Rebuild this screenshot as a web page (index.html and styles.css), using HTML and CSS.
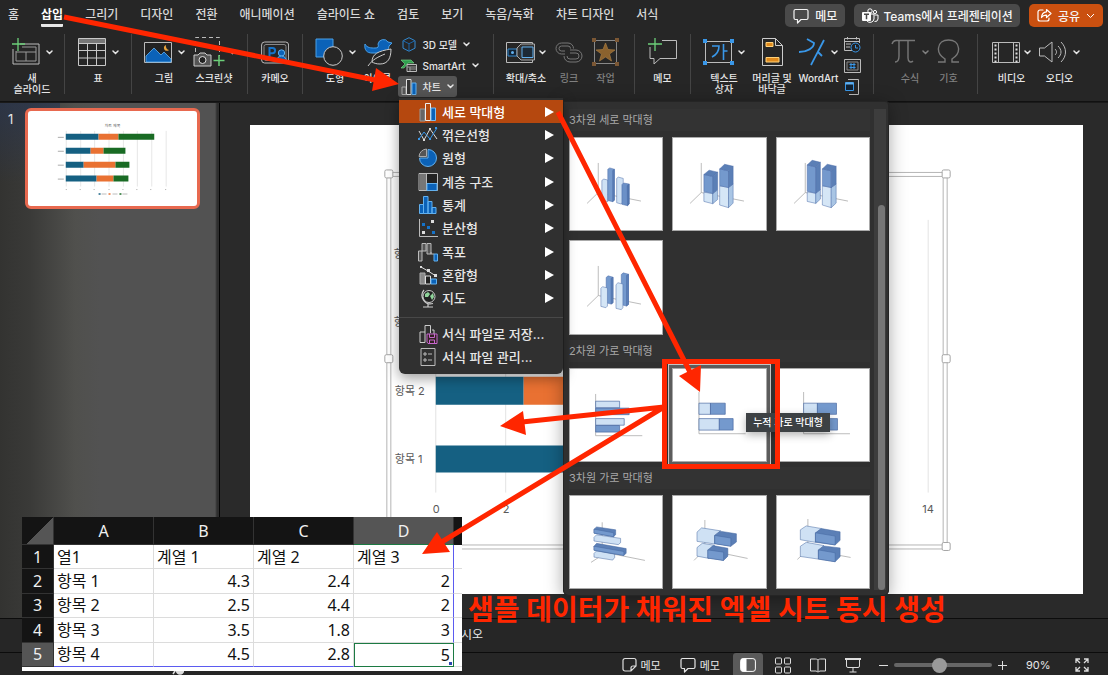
FILE: index.html
```html
<!DOCTYPE html>
<html lang="ko">
<head>
<meta charset="utf-8">
<title>차트 삽입</title>
<link rel="stylesheet" href="styles.css">
</head>
<body>
<svg class="defs" aria-hidden="true">
  <symbol id="chev" viewBox="0 0 7 5"><path d="M1 1l2.500 2.500L6 1" fill="none" stroke="currentColor" stroke-width="1.500" stroke-linecap="round"/></symbol>
  <symbol id="axes3d" viewBox="0 0 281 281"><path d="M86 76V166L52 199M86 166L216 192" fill="none" stroke="#999" stroke-width="2"/></symbol>
  <symbol id="note" viewBox="0 0 16 16"><path d="M2.500 1.500h11a1.500 1.500 0 011.500 1.500v7a1.500 1.500 0 01-1.500 1.500H8L4.500 15v-3.500h-2A1.500 1.500 0 011 10V3a1.500 1.500 0 011.500-1.500z" fill="none" stroke="currentColor" stroke-width="1.200" stroke-linejoin="round"/></symbol>
</svg>
<div class="app">
  <header class="top">
    <nav class="tabs">
      <a href="#">홈</a><a href="#" class="active">삽입</a><a href="#">그리기</a><a href="#">디자인</a><a href="#">전환</a><a href="#">애니메이션</a><a href="#">슬라이드 쇼</a><a href="#">검토</a><a href="#">보기</a><a href="#">녹음/녹화</a><a href="#">차트 디자인</a><a href="#">서식</a>
    </nav>
    <div class="actions">
      <button class="act"><svg width="16" height="16"><use href="#note"/></svg>메모</button>
      <button class="act teams"><svg width="18" height="16" viewBox="0 0 18 16"><circle cx="9" cy="3" r="2.200" fill="none" stroke="#fff"/><circle cx="14" cy="4" r="1.600" fill="none" stroke="#fff"/><path d="M8 6h5v5a4 4 0 01-7 2M13.500 7H17v4a3 3 0 01-3.500 2.500" fill="none" stroke="#fff"/><rect x="1" y="4" width="9" height="9" rx="1" fill="#fff"/><path d="M3 6.200h5M5.500 6.200v5" stroke="#484848" stroke-width="1.500"/></svg>Teams에서 프레젠테이션</button>
      <button class="act share"><svg width="15" height="15" viewBox="0 0 15 15" fill="none" stroke="#fff" stroke-width="1.200" stroke-linejoin="round" stroke-linecap="round"><path d="M6 2H3a2 2 0 00-2 2v7a2 2 0 002 2h7a2 2 0 002-2v-1"/><path d="M9.500 1.500l4.500 4-4.500 4V7.200C7 7 5.500 8 4.500 9.500 4.700 6 6.500 4 9.500 3.800z"/></svg>공유<svg width="9" height="6" viewBox="0 0 9 6"><path d="M1 1l3.500 3.500L8 1" fill="none" stroke="#fff"/></svg></button>
    </div>
  </header>

  <section class="ribbon" aria-label="삽입">
    <div class="group">
      <button class="tool"><span class="pic"><svg width="28" height="28" viewBox="0 0 28 28" fill="none"><path d="M8 6h19v20H1V11" stroke="#bbb"/><path d="M10 9h14v14H4V13M4 14h20M14 14v9" stroke="#999"/><path d="M6 0v13M0 6h13" stroke="#6ccf79" stroke-width="1.300"/></svg><svg class="chev"><use href="#chev"/></svg></span><span class="label">새<br>슬라이드</span></button>
    </div>
    <div class="group">
      <button class="tool"><span class="pic"><svg width="28" height="28" viewBox="0 0 28 28" fill="none"><path d="M1 1h26v4H1z" fill="#777"/><path d="M1 .5h26.500v27H.5V.5zM1 5.500h26M1 12.500h26M1 20h26M9.500 5v22M18.500 5v22" stroke="#c8c8c8"/></svg><svg class="chev"><use href="#chev"/></svg></span><span class="label">표</span></button>
    </div>
    <div class="group">
      <button class="tool"><span class="pic"><svg width="28" height="28" viewBox="0 0 28 28"><path d="M.5 4.500h27v20H.5z" fill="#222" stroke="#bbb"/><path d="M2 24V18l8-8 7 7 3-3 7 7v3z" fill="#0b62b8" stroke="#62b0ee" stroke-width=".8"/><path d="M22 7a3 3 0 103 5 4 4 0 01-3-5z" fill="#e8a33d"/></svg><svg class="chev"><use href="#chev"/></svg></span><span class="label">그림</span></button>
      <button class="tool"><span class="pic"><svg width="32" height="30" viewBox="0 0 32 30" fill="none"><path d="M2.500 15V.5h24V19" stroke="#bbb" stroke-dasharray="4 3"/><path d="M1 18h4l2-2h5l2 2h4v11H1z" fill="#555" stroke="#ccc"/><circle cx="9.500" cy="23" r="3.500" fill="#222" stroke="#ddd"/><path d="M26 18v11M20.500 23.500h11" stroke="#6ccf79" stroke-width="1.500"/></svg><svg class="chev near"><use href="#chev"/></svg></span><span class="label">스크린샷</span></button>
    </div>
    <div class="group">
      <button class="tool"><span class="pic"><svg width="28" height="28" viewBox="0 0 28 28" fill="none"><rect x=".6" y="4" width="27" height="21" rx="3" stroke="#bbb"/><rect x="3" y="6.500" width="22" height="16" rx="2" stroke="#888"/><path d="M8.500 19V10h3a2.600 2.600 0 010 5.200h-3" stroke="#1673c8" stroke-width="2"/><circle cx="20.500" cy="15" r="3.200" fill="#0b62b8" stroke="#62b0ee"/><path d="M15.500 23a5 5 0 0110 0z" fill="#0b62b8" stroke="#62b0ee"/></svg></span><span class="label">카메오</span></button>
    </div>
    <div class="group">
      <button class="tool"><span class="pic"><svg width="28" height="28" viewBox="0 0 28 28"><path d="M1 1h17v18H1z" fill="#0b62b8" stroke="#4aa0e6"/><circle cx="18" cy="18" r="9.300" fill="#262626" stroke="#ccc"/></svg><svg class="chev"><use href="#chev"/></svg></span><span class="label">도형</span></button>
      <button class="tool"><span class="pic"><svg width="28" height="30" viewBox="0 0 28 30"><path d="M14 7a5.500 5.500 0 0110-2l4 1-3 3c0 4-3 5-4 7H8C3 16 0 13 1 7c2 4 6 4 10 4 3 0 4-1 3-4z" fill="#0b62b8" stroke="#4aa0e6"/><path d="M8 25c0-8 6-11 19-13 0 9-3 15-11 15-4 0-6-1-8-2zM4 29c5-7 10-9 17-12" fill="#262626" stroke="#ccc"/></svg></span><span class="label">아이콘</span></button>
      <div class="stack">
        <button class="mini"><svg width="16" height="15" viewBox="0 0 16 15" fill="none" stroke="#3489cf"><path d="M8 .7l6 3v7.500l-6 3-6-3V3.700z"/><path d="M2 3.700l6 3 6-3M8 6.700v7.500" stroke="#1c65a8"/></svg>3D 모델<svg class="chev"><use href="#chev"/></svg></button>
        <button class="mini"><svg width="16" height="13" viewBox="0 0 16 13"><path d="M0 1h10l3 3H7l-4 5H0l4-4z" fill="#2f9e4f" stroke="#7fdb8d" stroke-width=".6"/><path d="M6 5.500h9.500v7H6z" fill="#333" stroke="#bbb"/><path d="M6 8h9M9 8v4M8 10h7" stroke="#999"/></svg>SmartArt<svg class="chev"><use href="#chev"/></svg></button>
        <button class="mini on"><svg width="16" height="16" viewBox="0 0 16 16"><path d="M1 8h4v7.500H1z" fill="#555" stroke="#aaa"/><path d="M5.500.5h4.500v15H5.500z" fill="#333" stroke="#ddd"/><path d="M11 4h4v11.500h-4z" fill="#0b62b8" stroke="#62b0ee"/></svg>차트<svg class="chev"><use href="#chev"/></svg></button>
      </div>
    </div>
    <div class="group zoomset">
      <button class="tool"><span class="pic"><svg width="29" height="28" viewBox="0 0 29 28"><path d="M.5 4.500h26v20H.5z" fill="none" stroke="#bbb"/><path d="M2 11h9v7H2z" fill="#123" stroke="#3489cf"/><circle cx="6.500" cy="14.500" r="1.500" fill="#62b0ee"/><path d="M11 10l4-4h13.500v16H15l-4-4z" fill="#333" stroke="#aaa"/><path d="M16 9h11v10.500H16z" fill="#1d2a36" stroke="#62b0ee"/></svg><svg class="chev near"><use href="#chev"/></svg></span><span class="label">확대/축소</span></button>
      <button class="tool dim" disabled><span class="pic"><svg width="28" height="28" viewBox="0 0 28 28" fill="none" stroke="#777"><path d="M10 16H6.500a5.500 5.500 0 010-11H13a5.500 5.500 0 015.500 5.500M15 12h6a6 6 0 010 12h-6a6 6 0 01-6-6"/><path d="M10 13H6.500a2.500 2.500 0 010-5H13a2.500 2.500 0 012.500 2.500M15 15h6a3 3 0 010 6h-6a3 3 0 01-3-3"/></svg></span><span class="label">링크</span></button>
      <button class="tool dim" disabled><span class="pic"><svg width="27" height="28" viewBox="0 0 27 28"><path d="M2.500 2.500h22v23h-22z" fill="none" stroke="#888"/><path d="M0 0h4v4H0zM23 0h4v4h-4zM0 24h4v4H0zM23 24h4v4h-4z" fill="#7b5734"/><path d="M13.500 5l2.500 6.500 7 .5-5.500 4 2 7-6-4-6 4 2-7L4 12l7-.5z" fill="#8b622e" stroke="#a57a42" stroke-width=".7"/></svg></span><span class="label">작업</span></button>
    </div>
    <div class="group">
      <button class="tool"><span class="pic"><svg width="29" height="28" viewBox="0 0 29 28" fill="none"><path d="M14 2.500h14.500v18H12L6 26v-5.500H2V9" stroke="#bbb"/><path d="M7 0v13M0 6h14" stroke="#6ccf79" stroke-width="1.300"/></svg></span><span class="label">메모</span></button>
    </div>
    <div class="group">
      <button class="tool"><span class="pic"><svg width="31" height="28" viewBox="0 0 31 28"><path d="M2.500 3.500h26v21h-26z" fill="none" stroke="#bbb"/><path d="M0 1h4v4H0zM27 1h4v4h-4zM0 23h4v4H0zM27 23h4v4h-4z" fill="#3997e8"/><path d="M9 8h7c0 5-3 9-7 11M20.500 6v16M20.500 13h4" fill="none" stroke="#3997e8" stroke-width="1.600"/></svg><svg class="chev near"><use href="#chev"/></svg></span><span class="label">텍스트<br>상자</span></button>
      <button class="tool wide"><span class="pic"><svg width="21" height="28" viewBox="0 0 21 28"><path d="M.5.5h13l7 7v20H.5z" fill="none" stroke="#ccc"/><path d="M13.500.5v7h7" fill="none" stroke="#ccc"/><path d="M4 4.500h7v4H4zM4 19.500h13v4.500H4z" fill="#e08a1c" stroke="#ffd27a"/></svg></span><span class="label">머리글 및<br>바닥글</span></button>
      <button class="tool"><span class="pic"><svg width="26" height="28" viewBox="0 0 26 28" fill="none" stroke="#3997e8" stroke-width="1.800"><path d="M8 1l7 4c0 5-7 9-15 9M25 2c-4 8-8 15-13 25M19 14l4 4"/></svg><svg class="chev"><use href="#chev"/></svg></span><span class="label">WordArt</span></button>
      <div class="stack trio">
        <button class="mini" aria-label="날짜 및 시간"><svg width="17" height="17" viewBox="0 0 17 17" fill="none"><path d="M8 14.500H.5v-12h15V7M.5 5.500h15M3.500 1v2.500M12.500 1v2.500M2 8h5M2 11h4" stroke="#bbb"/><circle cx="11.500" cy="11.500" r="4.500" fill="#222" stroke="#3997e8"/><path d="M11.500 9v3h2.500" stroke="#3997e8"/></svg></button>
        <button class="mini" aria-label="슬라이드 번호"><svg width="17" height="14" viewBox="0 0 17 14" fill="none"><path d="M.5.5h16v13H.5z" stroke="#bbb"/><path d="M3 3h11v8H3z" stroke="#888"/><path d="M5.500 5.500h6M5.500 8.500h6M7 4v6M10 4v6" stroke="#3997e8"/></svg></button>
        <button class="mini" aria-label="개체"><svg width="17" height="17" viewBox="0 0 17 17"><path d="M4 1.500h10.500v15H5" fill="none" stroke="#bbb"/><path d="M1.500 4.500h8v8h-8z" fill="#123" stroke="#3997e8"/><path d="M1.500 5.500h8" stroke="#62b0ee" stroke-width="2"/></svg></button>
      </div>
    </div>
    <div class="group">
      <button class="tool dim" disabled><span class="pic"><svg width="25" height="28" viewBox="0 0 25 28" fill="none" stroke="#777" stroke-width="1.400"><path d="M1 6c1-3 2-3.500 4-3.500h19M8 3v15c0 4-2 6-4 6M17 3v17c0 4 3 5 5 3"/></svg><svg class="chev"><use href="#chev"/></svg></span><span class="label">수식</span></button>
      <button class="tool dim" disabled><span class="pic"><svg width="23" height="28" viewBox="0 0 23 28" fill="none" stroke="#777" stroke-width="1.400"><path d="M1 24h7v-3C3 18 1 14 1.500 10 2 5 6 2 11.500 2S21 5 21.500 10c.5 4-1.500 8-6.500 11v3h7"/></svg></span><span class="label">기호</span></button>
    </div>
    <div class="group last">
      <button class="tool"><span class="pic"><svg width="28" height="28" viewBox="0 0 28 28" fill="none"><path d="M.5 4.500h27v20H.5zM6.500 5v19M21.500 5v19" stroke="#bbb"/><path d="M3.500 6.500v18M24.500 6.500v18" stroke="#ddd" stroke-width="2" stroke-dasharray="2 2"/></svg><svg class="chev near"><use href="#chev"/></svg></span><span class="label">비디오</span></button>
      <button class="tool"><span class="pic"><svg width="28" height="28" viewBox="0 0 28 28" fill="none" stroke="#bbb"><path d="M.5 10h5L13 4v20L5.500 18h-5z"/><path d="M16 11c2 2 2 4 0 6M19 8c4 4 4 8 0 12M22 4c6 6 6 14 0 20"/></svg><svg class="chev"><use href="#chev"/></svg></span><span class="label">오디오</span></button>
    </div>
  </section>

  <main class="work">
    <aside class="slides">
      <span class="num">1</span>
      <button class="thumb" aria-label="슬라이드 1">
        <svg viewBox="0 0 168 94">
          <path d="M37.500 19v56M52 19v56M66 19v56M80.500 19v56M95 19v56M109 19v56M123.500 19v56M138 19v56" stroke="#dcdcdc" stroke-width=".7"/>
          <g fill="#156082"><path d="M37 22h33v6H37zM37 36h25v6H37zM37 50h18v6H37zM37 64h31v6H37z"/></g>
          <g fill="#e97132"><path d="M70 22h20v6H70zM62 36h13v6H62zM55 50h32v6H55zM68 64h17v6H68z"/></g>
          <g fill="#196b24"><path d="M90 22h36v6H90zM75 36h22v6H75zM87 50h14v6H87zM85 64h15v6H85z"/></g>
          <path d="M29 25.500h6M29 39.500h6M29 53.500h6M29 67.500h6M37 78h1M51 78h1M65 78h1M80 78h1M94 78h1M108 78h1M122 78h1M137 78h1" stroke="#aaa"/>
          <path d="M70 82.500h2" stroke="#156082" stroke-width="1.500"/><path d="M80 82.500h2" stroke="#e97132" stroke-width="1.500"/><path d="M91 82.500h2" stroke="#196b24" stroke-width="1.500"/><path d="M73 82.500h5M84 82.500h5M94 82.500h5" stroke="#bbb"/>
          <text x="84" y="15" font-size="4" text-anchor="middle" fill="#555">차트 제목</text>
        </svg>
      </button>
    </aside>
    <div class="canvas">
      <svg class="slide" viewBox="0 0 834 470" preserveAspectRatio="none">
        <rect width="834" height="470" fill="#fff"/>
        <path d="M186 95v273M256 95v273M327 95v273M397 95v273M468 95v273M538 95v273M608 95v273M679 95v273" stroke="#e3e3e3"/>
        <g fill="#156082"><path d="M186 115h158v28H186zM186 184h123v27H186zM186 252h88v28H186zM186 321h151v27H186z"/></g>
        <g fill="#e97132"><path d="M344 115h99v28h-99zM309 184h63v27h-63zM274 252h155v28H274zM337 321h84v27h-84z"/></g>
        <g class="axis"><text x="144" y="133">항목 4</text><text x="144" y="201">항목 3</text><text x="145" y="270">항목 2</text><text x="145" y="338">항목 1</text>
        <text x="183" y="388">0</text><text x="253" y="388">2</text><text x="673" y="388">14</text></g>
        <path d="M137 47.500h561v377H137zM141 51.500h553v369H141z" fill="none" stroke="#b5b5b5"/>
        <g fill="#fff" stroke="#a5a5a5"><rect x="135" y="45" width="8" height="8" rx="1.500"/><rect x="135" y="230" width="8" height="8" rx="1.500"/><rect x="693" y="45" width="8" height="8" rx="1.500"/><rect x="693" y="230" width="8" height="8" rx="1.500"/><rect x="693" y="418" width="8" height="8" rx="1.500"/></g>
      </svg>
    </div>
  </main>
  <div class="notes">시오</div>
  <footer class="status">
    <button class="access" aria-label="접근성"><svg width="13" height="13" viewBox="0 0 13 13" fill="none" stroke="#ddd" stroke-width="1.500"><circle cx="4" cy="2.500" r="1.500"/><path d="M1 6h7M4 6v3l-2 3"/><circle cx="9" cy="8.500" r="3.500" fill="#ddd"/></svg></button>
    <button class="sb"><svg width="15" height="16" viewBox="0 0 15 16" fill="none" stroke="#ddd" stroke-width="1.200"><path d="M3 1.500h9a2 2 0 012 2V9l-5 5H3a2 2 0 01-2-2V3.500a2 2 0 012-2zM14 9h-3a2 2 0 00-2 2v3"/></svg>메모</button>
    <button class="sb"><svg width="16" height="16"><use href="#note"/></svg>메모</button>
    <div class="views">
      <button class="view on" aria-label="기본"><svg width="16" height="14" viewBox="0 0 16 14"><rect x=".6" y=".6" width="14.800" height="12.800" rx="2.500" fill="none" stroke="#fff"/><path d="M3 .6h3.500v12.800H3a2 2 0 01-2-2V3A2 2 0 013 .6z" fill="#fff"/></svg></button>
      <button class="view" aria-label="여러 슬라이드"><svg width="16" height="17" viewBox="0 0 16 17" fill="none" stroke="#ddd"><rect x=".5" y="1" width="6" height="6" rx="1"/><rect x="9.500" y="1" width="6" height="6" rx="1"/><rect x=".5" y="10" width="6" height="6" rx="1"/><rect x="9.500" y="10" width="6" height="6" rx="1"/></svg></button>
      <button class="view" aria-label="읽기용 보기"><svg width="16" height="16" viewBox="0 0 16 16" fill="none" stroke="#ddd"><path d="M8 3v11M8 3c-1-1-2-1-3-1H.5v12H6l2 1 2-1h5.500V2H11c-1 0-2 0-3 1z"/></svg></button>
      <button class="view" aria-label="슬라이드 쇼"><svg width="16" height="16" viewBox="0 0 16 16" fill="none" stroke="#ddd"><path d="M0 2h16" stroke-width="2"/><path d="M1.500 2v7a1.500 1.500 0 001.500 1.500h10A1.500 1.500 0 0014.500 9V2M8 10.500V15M4.500 15h7"/></svg></button>
    </div>
    <button class="zoombtn" aria-label="축소"><svg width="9" height="9"><path d="M0 4.500h9" stroke="#ddd"/></svg></button>
    <input class="zoom" type="range" min="10" max="170" value="83" aria-label="확대/축소">
    <button class="zoombtn" aria-label="확대"><svg width="9" height="9"><path d="M0 4.500h9M4.500 0v9" stroke="#ddd"/></svg></button>
    <span class="pct">90%</span>
    <button class="fit" aria-label="맞춤"><svg width="14" height="14" viewBox="0 0 14 14" fill="none" stroke="#ddd" stroke-width="1.300"><path d="M1 5V1h4M1 1l4 4M9 1h4v4M13 1L9 5M1 9v4h4M1 13l4-4M13 9v4H9M13 13L9 9"/></svg></button>
  </footer>

  <div class="gallery">
    <div class="sections">
      <h3>3차원 세로 막대형</h3>
      <div class="tiles">
        <button class="tile" aria-label="3차원 묶은 세로 막대형"><svg viewBox="0 0 281 281"><use href="#axes3d"/><g stroke="#4a6aa8" stroke-width="1.500" stroke-linejoin="round"><path d="M97 129l6-4 12 3v66l-18-4z" fill="#cfe1f4"/><path d="M115 95l6-4 14 4v94l-5 5-15-4z" fill="#7499cd"/><path d="M130 99l5-4v94l-5 5z" fill="#5b7fb6"/><path d="M142 123l5-4 15 4v70l-6 8-14-4z" fill="#cfe1f4"/><path d="M158 142l5-5 17 3v61l-5 5-17-4z" fill="#6b90c7"/><path d="M174 145l6-5v61l-5 5z" fill="#5276ad"/></g></svg></button>
        <button class="tile" aria-label="3차원 누적 세로 막대형"><svg viewBox="0 0 281 281"><use href="#axes3d"/><g stroke="#4a6aa8" stroke-width="1.500" stroke-linejoin="round"><path d="M94 165l27 4v31l-27-7z" fill="#d5e6f6"/><path d="M121 169l15-11v29l-15 13z" fill="#a9c5e4"/><path d="M94 111l27 6v52l-27-6z" fill="#7499cd"/><path d="M94 111l16-13 26 6-15 13z" fill="#5b7fb6"/><path d="M121 117l15-13v53l-15 12z" fill="#5b7fb6"/><path d="M142 146l27 4v62l-27-8z" fill="#d5e6f6"/><path d="M169 150l14-10v58l-14 14z" fill="#a9c5e4"/><path d="M142 94l27 6v51l-27-6z" fill="#7499cd"/><path d="M142 94l15-14 26 6-14 14z" fill="#5b7fb6"/><path d="M169 100l14-14v54l-14 11z" fill="#5b7fb6"/></g></svg></button>
        <button class="tile" aria-label="3차원 100% 누적 세로 막대형"><svg viewBox="0 0 281 281"><use href="#axes3d"/><g stroke="#4a6aa8" stroke-width="1.500" stroke-linejoin="round"><path d="M92 164l26 4v31l-26-6z" fill="#d5e6f6"/><path d="M118 168l14-11v29l-14 13z" fill="#a9c5e4"/><path d="M92 82l26 6v80l-26-6z" fill="#7499cd"/><path d="M92 82l15-14 25 6-14 14z" fill="#5b7fb6"/><path d="M118 88l14-14v83l-14 11z" fill="#5b7fb6"/><path d="M138 146l27 4v62l-27-8z" fill="#d5e6f6"/><path d="M165 150l15-10v58l-15 14z" fill="#a9c5e4"/><path d="M138 94l27 6v51l-27-6z" fill="#7499cd"/><path d="M138 94l15-14 27 6-15 14z" fill="#5b7fb6"/><path d="M165 100l15-14v54l-15 11z" fill="#5b7fb6"/></g></svg></button>
        <button class="tile" aria-label="3차원 세로 막대형"><svg viewBox="0 0 281 281"><use href="#axes3d"/><g stroke="#4a6aa8" stroke-width="1.500" stroke-linejoin="round"><path d="M110 111l6-5 15 4v78l-6 4-15-4z" fill="#7499cd"/><path d="M125 114l6-4v78l-6 4z" fill="#5b7fb6"/><path d="M94 144l5-5 15 4v55l-5 5-15-4z" fill="#d5e6f6"/><path d="M156 102l6-5 16 4v92l-6 5-16-4z" fill="#7499cd"/><path d="M172 105l6-4v92l-6 5z" fill="#5b7fb6"/><path d="M140 133l6-6 15 4v72l-5 6-16-4z" fill="#d5e6f6"/></g></svg></button>
      </div>
      <h3>2차원 가로 막대형</h3>
      <div class="tiles">
        <button class="tile" aria-label="묶은 가로 막대형"><svg viewBox="0 0 281 281"><path d="M78 76v127h142" fill="none" stroke="#999" stroke-width="2"/><g stroke="#44659f" stroke-width="2"><path d="M78 98h73v20H78z" fill="#cfe1f4"/><path d="M78 119h102v20H78z" fill="#7499cd"/><path d="M78 151h87v20H78z" fill="#cfe1f4"/><path d="M78 172h73v20H78z" fill="#7499cd"/></g></svg></button>
        <button class="tile picked" aria-label="누적 가로 막대형"><svg viewBox="0 0 281 281"><path d="M79 70v127h142" fill="none" stroke="#999" stroke-width="2"/><g stroke="#44659f" stroke-width="2"><path d="M79 104h35v34H79zM79 151h62v35H79z" fill="#cfe1f4"/><path d="M114 104h45v34h-45zM141 151h42v35h-42z" fill="#7499cd"/></g></svg></button>
        <button class="tile" aria-label="100% 누적 가로 막대형"><svg viewBox="0 0 281 281"><path d="M81 70v127h141" fill="none" stroke="#999" stroke-width="2"/><g stroke="#44659f" stroke-width="2"><path d="M81 104h42v34H81zM81 151h58v35H81z" fill="#cfe1f4"/><path d="M123 104h58v34h-58zM139 151h45v35h-45z" fill="#7499cd"/></g></svg></button>
      </div>
      <h3>3차원 가로 막대형</h3>
      <div class="tiles">
        <button class="tile" aria-label="3차원 묶은 가로 막대형"><svg viewBox="0 0 281 281"><path d="M98 80v100L64 202M98 170l130 26" fill="none" stroke="#999" stroke-width="2"/><g stroke="#44659f" stroke-width="1.500" stroke-linejoin="round"><path d="M73 175l8-8 55 10v10l-6 8-57-9z" fill="#cfe1f4"/><path d="M73 153l8-9 90 16v14l-7 7-91-16z" fill="#5b7fb6"/><path d="M73 153l91 16v12l-91-16z" fill="#7499cd"/><path d="M73 126l8-8 73 11v13l-7 6-74-11z" fill="#cfe1f4"/><path d="M73 101l8-7 58 9v14l-6 7-60-11z" fill="#5b7fb6"/><path d="M73 101l60 11v12l-60-11z" fill="#7499cd"/></g></svg></button>
        <button class="tile" aria-label="3차원 누적 가로 막대형"><svg viewBox="0 0 281 281"><path d="M97 73v90L64 196M97 163l130 27" fill="none" stroke="#999" stroke-width="2"/><g stroke="#44659f" stroke-width="1.500" stroke-linejoin="round"><path d="M73 157l16-13 38 6-17 14v26l-37-7z" fill="#cfe1f4"/><path d="M106 164l16-13 45 8v24l-13 13-48-7z" fill="#5b7fb6"/><path d="M106 164l48 7v25l-48-7z" fill="#7499cd"/><path d="M73 110l14-13 58 9-18 14v26l-54-8z" fill="#cfe1f4"/><path d="M127 120l16-13 50 8v25l-17 13-49-8z" fill="#5b7fb6"/><path d="M127 120l49 8v25l-49-8z" fill="#7499cd"/></g></svg></button>
        <button class="tile" aria-label="3차원 100% 누적 가로 막대형"><svg viewBox="0 0 281 281"><path d="M94 70v93L62 193M94 163l130 24" fill="none" stroke="#999" stroke-width="2"/><g stroke="#44659f" stroke-width="1.500" stroke-linejoin="round"><path d="M71 153l18-12 54 10-17 14v27l-55-8z" fill="#cfe1f4"/><path d="M126 164l16-12 50 6v27l-15 15-51-8z" fill="#5b7fb6"/><path d="M126 164l51 9v27l-51-8z" fill="#7499cd"/><path d="M71 103l18-12 46 8-18 15v27l-46-8z" fill="#cfe1f4"/><path d="M117 112l18-13 57 10v26l-15 14-60-8z" fill="#5b7fb6"/><path d="M117 112l60 10v27l-60-10z" fill="#7499cd"/></g></svg></button>
      </div>
    </div>
    <div class="track"><div class="bar"></div></div>
  </div>

  <div class="menu">
    <div class="items">
      <button class="item on"><svg viewBox="0 0 20 20"><path d="M2 7h5v12H2z" fill="#666" stroke="#999"/><path d="M7.500 1.500h5v17h-5z" fill="#b24a10" stroke="#eee"/><path d="M13 6h4.500v12.500H13z" fill="#0b62b8" stroke="#7bbcf0"/></svg>세로 막대형<i></i></button>
      <button class="item"><svg viewBox="0 0 20 20" fill="none"><path d="M1 6l5 9 6-11 7 10" stroke="#ddd"/><path d="M1 14l5-7 6 7 7-11" stroke="#3997e8"/><path d="M5 14h2v2H5zM11 3h2v2h-2z" fill="#ddd"/><path d="M0 13h2v2H0zM11 13h2v2h-2zM17 2h2v2h-2z" fill="#3997e8"/></svg>꺾은선형<i></i></button>
      <button class="item"><svg viewBox="0 0 20 20"><path d="M10 1.500a8.500 8.500 0 11-8.500 8.500H10z" fill="#0b62b8" stroke="#62b0ee"/><path d="M8.500 1v7.500H1A8 8 0 018.500 1z" fill="#555" stroke="#aaa"/></svg>원형<i></i></button>
      <button class="item"><svg viewBox="0 0 20 20"><path d="M1 1.500h18.500v17H1z" fill="#222" stroke="#bbb"/><path d="M2 2h6v16H2z" fill="#777"/><path d="M8.500 1v18" stroke="#bbb"/><path d="M9 11.500h10v7H9z" fill="#0b62b8" stroke="#62b0ee"/></svg>계층 구조<i></i></button>
      <button class="item"><svg viewBox="0 0 20 20"><path d="M1.500 9.500h4v9h-4zM5.500 1.500h4.500v17H5.500zM10 6.500h4v12h-4zM14 12.500h4v6h-4z" fill="#0b62b8" stroke="#62b0ee"/></svg>통계<i></i></button>
      <button class="item"><svg viewBox="0 0 20 20"><path d="M1.500 1v17.500H20" fill="none" stroke="#bbb"/><path d="M4 5h3v3H4zM9 8h3v3H9zM14 13h3v3h-3z" fill="#1673c8"/><path d="M13 2h3v3h-3zM4 13h3v3H4z" fill="#ddd"/></svg>분산형<i></i></button>
      <button class="item"><svg viewBox="0 0 20 20"><path d="M.5 9h3.500v10H.5zM4 1.500h4V9H4zM9 1.500h4V12H9z" fill="#555" stroke="#bbb"/><path d="M13 10v2h3" fill="none" stroke="#bbb"/><path d="M16 12h3.500v7H16z" fill="#0b62b8" stroke="#62b0ee"/></svg>폭포<i></i></button>
      <button class="item"><svg viewBox="0 0 20 20"><path d="M2 8h5v11H2z" fill="#888" stroke="#aaa"/><path d="M7.500 11h5v8h-5z" fill="#222" stroke="#ddd"/><path d="M13 14h5.500v5H13z" fill="#0b62b8" stroke="#62b0ee"/><path d="M3 2l7 4 8 5" fill="none" stroke="#ddd"/><path d="M2 1h2v2H2zM9 4h3v3H9zM16 9h3v3h-3z" fill="#ddd"/></svg>혼합형<i></i></button>
      <button class="item"><svg viewBox="0 0 20 20"><circle cx="11" cy="8.500" r="6" fill="#222" stroke="#ccc"/><path d="M7 6l3-2 2 2-2 3H7zM12 8l3-3 1 4-2 3z" fill="#8fd39a"/><path d="M6 2a8.500 8.500 0 009 13.500M10 16v3M5 19h10" fill="none" stroke="#ccc" stroke-width="1.200"/></svg>지도<i></i></button>
    </div>
    <hr>
    <div class="items extra">
      <button class="item"><svg viewBox="0 0 20 20"><path d="M2 8h5v10.500H2zM7 1.500h5.500V9M7 1.500V8M14 6h2v4" fill="none" stroke="#ccc"/><path d="M9 10h10v9.500H10L9 18z" fill="#322" stroke="#c766cf"/><path d="M11.500 10v3.500h5V10M11.500 19v-3h5v3" fill="none" stroke="#c766cf"/></svg>서식 파일로 저장...</button>
      <button class="item"><svg viewBox="0 0 20 20" fill="none" stroke="#bbb"><path d="M3 1.500h14v17H3z"/><path d="M6 6h2v2H6zM10 7h4M6 12h2v2H6zM10 13h4"/></svg>서식 파일 관리...</button>
    </div>
  </div>

  <div class="tip" role="tooltip">누적 가로 막대형</div>

  <div class="sheet">
    <table>
      <thead><tr><th class="corner"></th><th>A</th><th>B</th><th>C</th><th class="sel">D</th><th class="edge"></th></tr></thead>
      <tbody>
        <tr><th>1</th><td>열1</td><td>계열 1</td><td>계열 2</td><td class="d">계열 3</td><td class="edge"></td></tr>
        <tr><th>2</th><td>항목 1</td><td class="n">4.3</td><td class="n">2.4</td><td class="n d">2</td><td class="edge"></td></tr>
        <tr><th>3</th><td>항목 2</td><td class="n">2.5</td><td class="n">4.4</td><td class="n d">2</td><td class="edge"></td></tr>
        <tr><th>4</th><td>항목 3</td><td class="n">3.5</td><td class="n">1.8</td><td class="n d">3</td><td class="edge"></td></tr>
        <tr class="end"><th class="sel">5</th><td>항목 4</td><td class="n">4.5</td><td class="n">2.8</td><td class="n cur">5</td><td class="edge"></td></tr>
      </tbody>
    </table>
  </div>

  <svg class="marks" viewBox="0 0 1108 675" width="1108" height="675" aria-hidden="true">
    <g fill="none" stroke="#ff2600" stroke-width="5"><path d="M64 17L380 81M558 112L692 376M664 407L522 422M664 407L440 543"/><rect x="664.500" y="361.500" width="113" height="105"/></g>
    <path d="M399 84L376 68 372 91zM700 392L679 376 701 365zM500 426L523 411 526 435zM422 554L437 532 450 552z" fill="#ff2600"/>
  </svg>
  <p class="caption">샘플 데이터가 채워진 엑셀 시트 동시 생성</p>
</div>
</body>
</html>
```
FILE: styles.css
```css
* { box-sizing: border-box; }
body { margin: 0; background: #262626; color: #e6e6e6; font-family: Inter, "Noto Sans CJK KR", sans-serif; font-size: 12px; }
button { font: inherit; color: inherit; background: none; border: 0; padding: 0; margin: 0; }
svg { display: block; flex: none; }
.defs { position: absolute; width: 0; height: 0; }
.app { position: relative; display: flex; flex-direction: column; min-height: 100vh; overflow: hidden; }

.top { display: flex; justify-content: space-between; align-items: flex-start; height: 31px; padding: 4px 5px 0 8px; white-space: nowrap; }
.tabs { display: flex; gap: 22px; font-weight: 500; }
.tabs a { color: #d8d8d8; text-decoration: none; line-height: 21px; height: 23px; }
.tabs .active { color: #fff; font-weight: 700; border-bottom: 3px solid #e8e8e8; border-radius: 1px; }
.actions { display: flex; gap: 9px; font-weight: 500; }
.act { display: flex; align-items: center; gap: 6px; height: 23px; padding: 0 8px; border-radius: 5px; background: #4a4a4a; color: #f4f4f4; }
.actions .teams { gap: 4px; padding: 0 7px; }
.actions .share { background: #ca5010; gap: 6px; }

.ribbon { display: grid; grid-template-columns: 65px 67px 116px 55px 191px 141px 56px 183px 104px 1fr; height: 71px; padding-top: 3px; border-bottom: 1px solid #111; }
.group { display: flex; justify-content: center; gap: 8px; height: 60px; border-right: 1px solid #444; }
.group.zoomset { gap: 9px; padding-right: 3px; }
.group.last { border: 0; justify-content: flex-start; padding-left: 14px; }
.tool { display: flex; flex-direction: column; align-items: center; gap: 3px; height: 66px; }
.wide { width: 38px; }
.pic { display: flex; align-items: center; justify-content: center; gap: 6px; height: 36px; }
.label { display: flex; justify-content: center; text-align: center; font-size: 10px; font-weight: 500; line-height: 11px; white-space: nowrap; width: 0; }
.chev { width: 7px; height: 5px; }
.near { margin-left: -2px; }
.dim { color: #808080; }
.stack { display: flex; flex-direction: column; align-items: flex-start; height: 64px; margin-left: -2px; }
.mini { display: flex; align-items: center; gap: 6px; height: 21px; padding: 0 3px; font-size: 10px; font-weight: 500; white-space: nowrap; flex: none; }
.mini.on { background: #555; border-radius: 3px; }
.trio .mini { padding: 0; }

.work { flex: 1; display: flex; border-top: 1px solid #1a1a1a; min-height: 0; }
.slides { display: flex; align-items: flex-start; gap: 10px; flex: 0 0 220px; padding: 5px 0 0 8px; border-right: 1px solid #050505; background: linear-gradient(180deg, rgba(40, 54, 84, .6), rgba(40, 54, 84, 0) 80px) 0 0 / 60px 100% no-repeat, linear-gradient(90deg, #333331, #3a3a38 30px, #50504d 75px, #525252 100px, #525252 215px, #2e2e2e 217px); }
.num { font-size: 13px; line-height: 22px; width: 7px; }
.thumb { width: 175px; padding: 1px; border: 3px solid #e8694f; border-radius: 6px; background: #fff; }
.thumb svg { width: 100%; }
.canvas { flex: 1; padding: 22px 25px 24px 30px; background: #2a2a2a; display: flex; }
.slide { width: 100%; height: 100%; }
.axis text { font-size: 11px; fill: #595959; }
.notes { height: 34px; padding-left: 461px; line-height: 31px; border-top: 1px solid #0c0c0c; }

.status { display: flex; align-items: center; justify-content: flex-end; height: 23px; padding: 2px 19px 0 0; border-top: 1px solid #0c0c0c; font-size: 11px; white-space: nowrap; }
.access { align-self: flex-end; margin: 0 auto 0 171px; }
.sb { display: flex; align-items: center; gap: 4px; margin-right: 19px; }
.views { display: flex; align-self: stretch; margin: -2px 11px 0 -6px; gap: 5px; }
.view { display: flex; align-items: center; justify-content: center; width: 30px; padding-top: 2px; }
.view.on { background: #5a5a5a; border-radius: 3px 3px 0 0; }
.zoom { appearance: none; width: 98px; height: 4px; margin: 0 6px; border-radius: 2px; background: #666; }
.zoom::-webkit-slider-thumb { appearance: none; width: 15px; height: 15px; border-radius: 50%; background: #999; }
.pct { width: 30px; margin: 0 19px; }

.gallery { position: absolute; left: 563px; top: 101px; width: 326px; display: flex; gap: 4px; padding: 8px 3px 2px 6px; background: #303030; border-radius: 0 4px 6px 6px; box-shadow: 0 3px 18px rgba(0, 0, 0, .35), inset 0 0 0 1px #252525; }
.sections { flex: 1; }
.gallery h3 { margin: 0; font-size: 11px; font-weight: 400; line-height: 22px; color: #a8a8a8; background: #333; }
.tiles { display: grid; grid-template-columns: repeat(3, 1fr); gap: 9px; padding: 6px 0 5px; }
.tile { background: #fff; border: 1px solid #aaa; }
.tile svg { width: 100%; }
.picked { box-shadow: 0 0 0 3px #5c5c5c, 0 0 0 4px #c4c4c4; }
.track { width: 12px; background: #3d3d3d; padding: 96px 1px 0 4px; margin-bottom: 4px; }
.bar { height: 100%; border-radius: 4px; background: #767676; }

.menu { position: absolute; left: 399px; top: 98px; width: 164px; padding: 2px 0 6px; background: #303030; border-radius: 0 0 6px 6px; box-shadow: 0 4px 14px rgba(0, 0, 0, .4); font-size: 13px; font-weight: 500; }
.items { display: grid; grid-auto-rows: 1fr; height: 210px; }
.items.extra { height: 46px; }
.item { display: flex; align-items: center; gap: 4px; padding: 0 9px 0 19px; text-align: left; line-height: 18px; white-space: nowrap; }
.item svg { width: 20px; height: 20px; }
.item.on { background: #b5480f; color: #fff; }
.item i { margin-left: auto; border-left: 9px solid #fff; border-top: 5px solid transparent; border-bottom: 5px solid transparent; }
.menu hr { margin: 7px 0 4px; border: 0; border-top: 1px solid #484848; }

.tip { position: absolute; left: 746px; top: 413px; width: 84px; background: #3d4144; color: #fff; font-size: 10px; font-weight: 500; line-height: 19px; text-align: center; white-space: nowrap; box-shadow: 0 3px 8px rgba(0, 0, 0, .3); }

.sheet { position: absolute; left: 22px; top: 517px; width: 440px; background: #fff; color: #111; padding-bottom: 4px; }
.sheet table { border-collapse: separate; border-spacing: 0; table-layout: fixed; width: 100%; height: 150px; font-family: "Noto Sans", "Noto Sans CJK KR", sans-serif; font-size: 16px; line-height: 22px; }
.sheet th { height: 24px; padding: 0; font-weight: 400; background: #141414; color: #f0f0f0; border: solid #333; border-width: 0 1px 1px 0; }
.sheet thead th { height: 28px; width: 100px; }
.sheet thead .corner { width: 32px; background: linear-gradient(135deg, #141414 54%, #555 55%); }
.sheet th.sel { background: #555; }
.sheet thead .sel { border-bottom-color: #1c7a43; }
.sheet thead .edge { width: 8px; border: 0; }
.sheet td { height: 24px; padding: 0 3px; border: solid #dcdcdc; border-width: 0 1px 1px 0; }
.sheet td.edge { border-right: 0; padding: 0; }
.sheet .n { text-align: right; }
.sheet .d { border-right-color: #5b5bf0; }
.sheet .end td { border-bottom-color: #5b5bf0; }
.sheet .end .cur { border: 1px solid #1c7a43; background: linear-gradient(#2b45b0, #2b45b0) right 1px bottom 1px / 3px 3px no-repeat; }
.sheet .end .edge { border-bottom-color: #dcdcdc; }

.marks { position: absolute; left: 0; top: 0; pointer-events: none; }
.caption { position: absolute; left: 468px; top: 596px; margin: 0; font-size: 28px; line-height: 28px; font-weight: 700; color: #ff2600; white-space: nowrap; }
```
